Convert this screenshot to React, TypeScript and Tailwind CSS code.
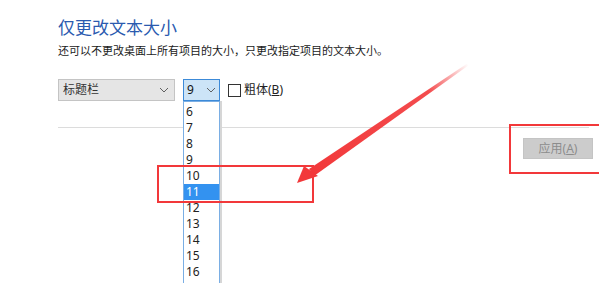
import React from 'react';

const sizes = ['6', '7', '8', '9', '10', '11', '12', '13', '14', '15', '16', '17'];

function Chevron() {
    return (
        <svg width="10" height="6" viewBox="0 0 10 6" className="shrink-0">
            <path d="M1 1 L5 5 L9 1" fill="none" stroke="#606060" strokeWidth="1" />
        </svg>
    );
}

export default function App() {
    return (
        <div
            className="relative w-[599px] h-[283px] overflow-hidden bg-white"
            style={{ fontFamily: '"Noto Sans", "Noto Sans CJK SC", sans-serif' }}
        >
            <div className="pl-[58px] pt-[17px]">
                <h1 className="text-[17px] leading-[22px] text-[#2a5aaf]">仅更改文本大小</h1>
                <p className="mt-[4px] text-[11px] leading-[16px] text-[#1a1a1a]">
                    还可以不更改桌面上所有项目的大小，只更改指定项目的文本大小。
                </p>

                <div className="mt-[20px] flex items-center h-[22px]">
                    <div className="flex items-center justify-between w-[117px] h-[22px] pl-[4px] pr-[5px] bg-[#e5e5e5] border border-[#c4c4c4] text-[12px] text-[#333]">
                        <span>标题栏</span>
                        <Chevron />
                    </div>
                    <div className="relative ml-[8px]">
                        <div className="flex items-center justify-between w-[37px] h-[22px] pl-[3px] pr-[3px] bg-[#cce4f7] border border-[#3c8ad8] text-[12px] text-[#111]">
                            <span>9</span>
                            <Chevron />
                        </div>
                        <div className="absolute left-0 top-[22px] w-[37px] pt-[2px] bg-white border border-[#7aaee4] shadow-[2px_0_0_#d6d6d6] z-10">
                            {sizes.map((s) => (
                                <div
                                    key={s}
                                    className={
                                        s === '11'
                                            ? 'h-[16px] pl-[2px] text-[12px] leading-[16px] bg-[#3392f0] text-white'
                                            : 'h-[16px] pl-[2px] text-[12px] leading-[16px] text-[#222]'
                                    }
                                >
                                    {s}
                                </div>
                            ))}
                        </div>
                    </div>
                    <div className="ml-[8px] flex items-center">
                        <div className="w-[13px] h-[13px] border border-[#333] bg-white" />
                        <span className="ml-[3px] text-[12px] text-[#222]">
                            粗体(<span className="underline">B</span>)
                        </span>
                    </div>
                </div>

                <div className="mt-[26px] h-px bg-[#dcdcdc] mr-[10px]" />

                <div className="mt-[10px] flex justify-end pr-[6px]">
                    <div className="w-[70px] h-[21px] flex items-center justify-center bg-[#cccccc] border border-[#c4c4c4] text-[12px] text-[#8c8c8c]">
                        应用(<span className="underline">A</span>)
                    </div>
                </div>
            </div>

            {/* annotations */}
            <div className="absolute left-[157px] top-[165px] w-[157px] h-[38px] border-2 border-[#f2383a] z-20" />
            <div className="absolute left-[509px] top-[124px] w-[100px] h-[50px] border-2 border-[#f2383a] z-20" />
            <svg className="absolute left-0 top-0 z-30" width="599" height="283" viewBox="0 0 599 283">
                <defs>
                    <linearGradient id="fade" x1="468" y1="64" x2="310" y2="172" gradientUnits="userSpaceOnUse">
                        <stop offset="0" stopColor="#f2383a" stopOpacity="0" />
                        <stop offset="0.25" stopColor="#f2383a" stopOpacity="0.9" />
                        <stop offset="1" stopColor="#f2383a" stopOpacity="1" />
                    </linearGradient>
                </defs>
                <polygon points="468,63 469,65 314,176 309,169" fill="url(#fade)" />
                <polygon points="297,183 304,166 318,176" fill="#f2383a" />
            </svg>
        </div>
    );
}
